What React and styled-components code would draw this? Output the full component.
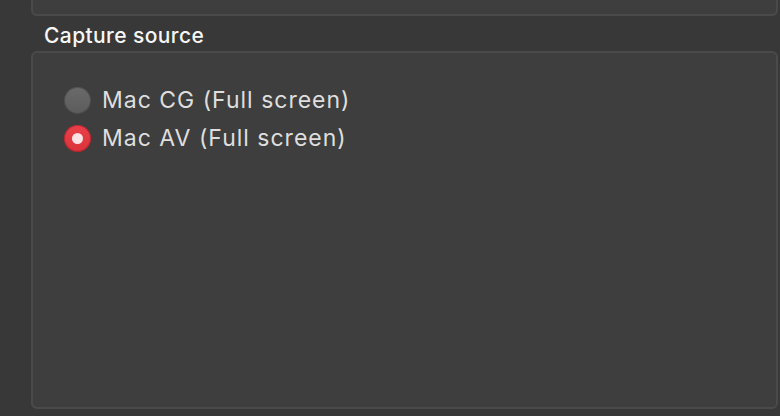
import React, { useState } from "react";
import styled, { createGlobalStyle } from "styled-components";

const Global = createGlobalStyle`
  html, body {
    margin: 0;
    padding: 0;
    background: #383838;
    height: 100%;
  }
  #root {
    height: 100%;
  }
`;

const Page = styled.div`
  box-sizing: border-box;
  height: 416px;
  padding: 0 2px 7px 31px;
  display: flex;
  flex-direction: column;
  font-family: Inter, "Liberation Sans", sans-serif;
  background: #383838;
`;

const PrevBox = styled.div`
  box-sizing: border-box;
  height: 16px;
  background: #3e3e3e;
  border: 2px solid #4a4a4a;
  border-top: none;
  border-radius: 0 0 6px 6px;
`;

const GroupTitle = styled.div`
  color: #f6f6f6;
  font-size: 21px;
  font-weight: 500;
  line-height: 24px;
  padding: 8px 0 3px 13px;
  letter-spacing: 0.4px;
`;

const GroupBox = styled.div`
  box-sizing: border-box;
  flex: 1;
  background: #3e3e3e;
  border: 2px solid #4a4a4a;
  border-radius: 6px;
  padding: 34px 0 0 31px;
  display: flex;
  flex-direction: column;
  gap: 11px;
`;

const Option = styled.label`
  display: flex;
  align-items: center;
  gap: 11px;
  cursor: default;
  height: 27px;
`;

const Dot = styled.span`
  box-sizing: border-box;
  width: 27px;
  height: 27px;
  border-radius: 50%;
  flex: none;
  display: flex;
  align-items: center;
  justify-content: center;
  background: ${(p) =>
    p.$on
      ? "linear-gradient(#ea3f48, #d9333c)"
      : "linear-gradient(#6a6a6a, #5c5c5c)"};
  box-shadow: inset 0 0 0 1px
    ${(p) => (p.$on ? "rgba(150, 20, 30, 0.5)" : "rgba(40, 40, 40, 0.35)")};
  &::after {
    content: "";
    display: ${(p) => (p.$on ? "block" : "none")};
    width: 11px;
    height: 11px;
    border-radius: 50%;
    background: #fde3e5;
  }
`;

const OptionText = styled.span`
  color: #dedede;
  font-size: 23px;
  line-height: 27px;
  letter-spacing: 1px;
`;

const sources = ["Mac CG (Full screen)", "Mac AV (Full screen)"];

export default function App() {
  const [selected, setSelected] = useState(1);
  return (
    <>
      <Global />
      <Page>
        <PrevBox />
        <GroupTitle>Capture source</GroupTitle>
        <GroupBox>
          {sources.map((s, i) => (
            <Option key={s} onClick={() => setSelected(i)}>
              <Dot $on={selected === i} />
              <OptionText>{s}</OptionText>
            </Option>
          ))}
        </GroupBox>
      </Page>
    </>
  );
}
